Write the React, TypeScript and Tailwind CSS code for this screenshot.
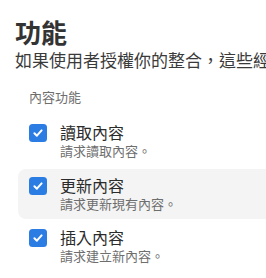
import React from "react";

const font = { fontFamily: '"Noto Sans CJK TC", "Noto Sans", sans-serif' };

function Check() {
  return (
    <div className="w-[18px] h-[18px] rounded-[3.5px] bg-[#2b7de4] flex items-center justify-center shrink-0">
      <svg width="12" height="12" viewBox="0 0 12 12" fill="none">
        <path d="M2.4 6.2 L4.9 8.7 L9.6 3.4" stroke="white" strokeWidth="2" strokeLinecap="round" strokeLinejoin="round" />
      </svg>
    </div>
  );
}

function Row({ title, desc, active }: { title: string; desc: string; active?: boolean }) {
  return (
    <div className={`flex gap-[13px] pl-[11px] pr-3 py-[6px] rounded-[8px] ${active ? "bg-[#f4f4f4]" : ""}`}>
      <div className="pt-[2px]">
        <Check />
      </div>
      <div className="flex flex-col">
        <div className="text-[16px] leading-[20px] text-[#2b2b2b]">{title}</div>
        <div className="text-[13px] leading-[18px] text-[#6e6e6e]">{desc}</div>
      </div>
    </div>
  );
}

export default function App() {
  return (
    <div className="w-[266px] h-[278px] overflow-hidden bg-white" style={font}>
      <div className="pl-[15px] pt-[16px]">
        <div className="text-[26px] leading-[32px] font-bold text-[#333333]">功能</div>
        <div className="text-[17px] leading-[24px] text-[#3a3a3a] whitespace-nowrap">
          如果使用者授權你的整合，這些經過授權的功能將可供使用。
        </div>
      </div>
      <div className="pl-[18px] mt-[16px] w-[320px]">
        <div className="pl-[11px] text-[13px] leading-[18px] text-[#6e6e6e]">內容功能</div>
        <div className="mt-[10px] flex flex-col gap-[2.5px]">
          <Row title="讀取內容" desc="請求讀取內容。" />
          <Row title="更新內容" desc="請求更新現有內容。" active />
          <Row title="插入內容" desc="請求建立新內容。" />
        </div>
      </div>
    </div>
  );
}
